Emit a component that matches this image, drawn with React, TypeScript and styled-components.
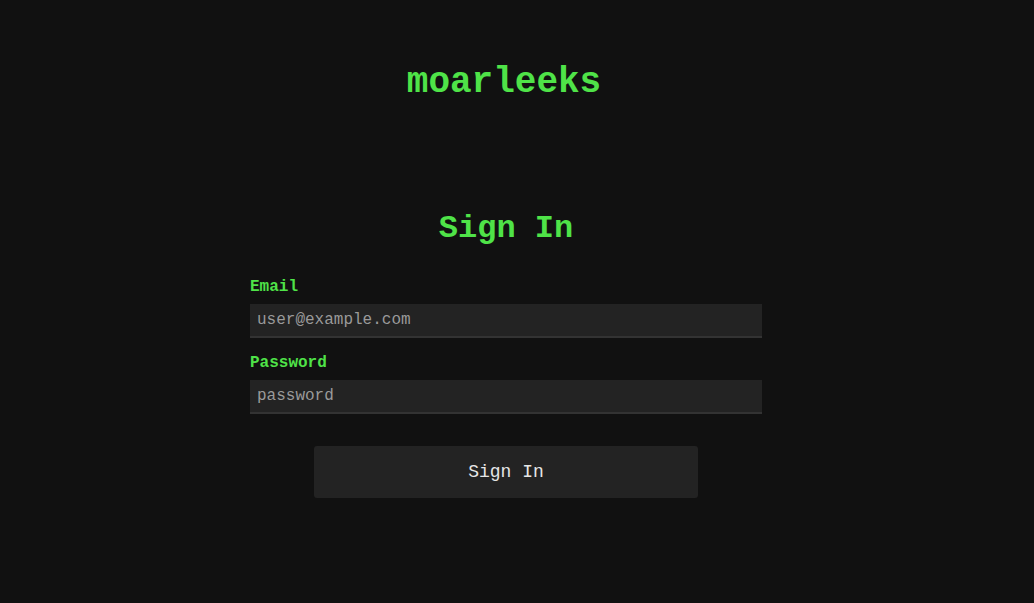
import React from 'react'
import styled, { createGlobalStyle } from 'styled-components'

const GlobalStyle = createGlobalStyle`
  html, body {
    margin: 0;
    padding: 0;
    background: #111111;
    font-family: "Liberation Mono", "Courier New", monospace;
  }
`

const Page = styled.main`
  min-height: 603px;
  box-sizing: border-box;
  padding: 62px 22px 0 0;
  display: flex;
  flex-direction: column;
  align-items: center;
`

const Logo = styled.h1`
  margin: 0;
  font-size: 36px;
  line-height: 41px;
  font-weight: bold;
  color: #4fe348;
  transform: translateX(-2px);
`

const Form = styled.form`
  margin-top: 108px;
  width: 512px;
  display: flex;
  flex-direction: column;
`

const Title = styled.h2`
  margin: 0 0 31px;
  font-size: 32px;
  line-height: 36px;
  font-weight: bold;
  text-align: center;
  color: #4fe348;
`

const Label = styled.label`
  font-size: 16px;
  line-height: 18px;
  font-weight: bold;
  color: #4fe348;
  margin-bottom: 8px;
`

const Input = styled.input`
  box-sizing: border-box;
  width: 100%;
  height: 34px;
  padding: 0 7px;
  border: none;
  border-bottom: 2px solid #333;
  background: #232323;
  color: #ddd;
  font-family: inherit;
  font-size: 16px;
  outline: none;
  margin-bottom: 16px;
  &::placeholder {
    color: #9a9a9a;
  }
`

const Submit = styled.button`
  align-self: center;
  margin-top: 16px;
  width: 384px;
  height: 52px;
  border: none;
  border-radius: 3px;
  background: #232323;
  color: #e6e6e6;
  font-family: inherit;
  font-size: 18px;
  cursor: pointer;
`

const App = () => {
  return (
    <>
      <GlobalStyle />
      <Page>
        <Logo>moarleeks</Logo>
        <Form onSubmit={(e) => e.preventDefault()}>
          <Title>Sign In</Title>
          <Label htmlFor="email">Email</Label>
          <Input id="email" type="email" placeholder="user@example.com" />
          <Label htmlFor="password">Password</Label>
          <Input id="password" type="password" placeholder="password" />
          <Submit type="submit">Sign In</Submit>
        </Form>
      </Page>
    </>
  )
}

export default App
